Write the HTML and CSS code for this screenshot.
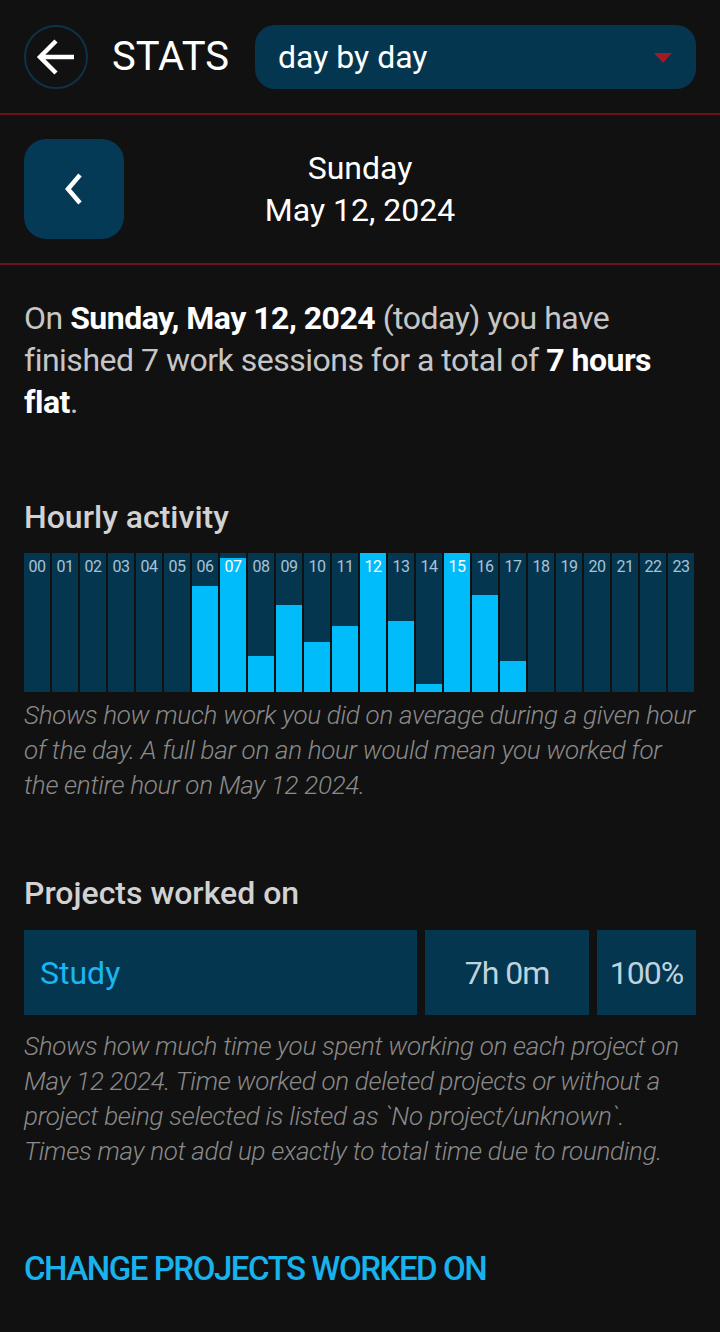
FILE: index.html
```html
<!DOCTYPE html>
<html lang="en">
<head>
<meta charset="utf-8">
<title>Stats</title>
<link rel="stylesheet" href="styles.css">
</head>
<body>
<header class="topbar">
  <button class="back-btn" aria-label="Back">
    <svg width="44" height="44" viewBox="0 0 44 44"><path d="M40 22H6M22 6L6 22l16 16" fill="none" stroke="#fff" stroke-width="4.5" stroke-linecap="butt" stroke-linejoin="miter"/></svg>
  </button>
  <h1 class="title">STATS</h1>
  <div class="dropdown">
    <span>day by day</span>
    <span class="caret"></span>
  </div>
</header>

<section class="datebar">
  <button class="prev-btn" aria-label="Previous day">
    <svg width="20" height="32" viewBox="0 0 20 32"><path d="M16 2L4 16l12 14" fill="none" stroke="#fff" stroke-width="4.5"/></svg>
  </button>
  <div class="date">
    <div>Sunday</div>
    <div>May 12, 2024</div>
  </div>
  <div class="spacer"></div>
</section>

<main class="content">
  <p class="summary">On <b>Sunday, May 12, 2024</b> (today) you have finished 7 work sessions for a total of <b>7 hours flat</b>.</p>

  <h2 class="heading hourly-heading">Hourly activity</h2>
  <div class="chart">
    <div class="col"><span class="lbl">00</span></div>
    <div class="col"><span class="lbl">01</span></div>
    <div class="col"><span class="lbl">02</span></div>
    <div class="col"><span class="lbl">03</span></div>
    <div class="col"><span class="lbl">04</span></div>
    <div class="col"><span class="lbl">05</span></div>
    <div class="col"><div class="bar" style="height:76%"></div><span class="lbl">06</span></div>
    <div class="col"><div class="bar" style="height:96.5%"></div><span class="lbl on">07</span></div>
    <div class="col"><div class="bar" style="height:26%"></div><span class="lbl">08</span></div>
    <div class="col"><div class="bar" style="height:62.5%"></div><span class="lbl">09</span></div>
    <div class="col"><div class="bar" style="height:36%"></div><span class="lbl">10</span></div>
    <div class="col"><div class="bar" style="height:47.5%"></div><span class="lbl">11</span></div>
    <div class="col"><div class="bar" style="height:100%"></div><span class="lbl on">12</span></div>
    <div class="col"><div class="bar" style="height:51%"></div><span class="lbl">13</span></div>
    <div class="col"><div class="bar" style="height:6%"></div><span class="lbl">14</span></div>
    <div class="col"><div class="bar" style="height:100%"></div><span class="lbl on">15</span></div>
    <div class="col"><div class="bar" style="height:70%"></div><span class="lbl">16</span></div>
    <div class="col"><div class="bar" style="height:22.5%"></div><span class="lbl">17</span></div>
    <div class="col"><span class="lbl">18</span></div>
    <div class="col"><span class="lbl">19</span></div>
    <div class="col"><span class="lbl">20</span></div>
    <div class="col"><span class="lbl">21</span></div>
    <div class="col"><span class="lbl">22</span></div>
    <div class="col"><span class="lbl">23</span></div>
  </div>
  <p class="caption">Shows how much work you did on average during a given hour of the day. A full bar on an hour would mean you worked for the entire hour on May 12 2024.</p>

  <h2 class="heading projects-heading">Projects worked on</h2>
  <div class="project-row">
    <div class="cell name">Study</div>
    <div class="cell num">7h 0m</div>
    <div class="cell num">100%</div>
  </div>
  <p class="caption caption2">Shows how much time you spent working on each project on May 12 2024. Time worked on deleted projects or without a project being selected is listed as `No project/unknown`. Times may not add up exactly to total time due to rounding.</p>

  <a class="change-link" href="#">CHANGE PROJECTS WORKED ON</a>
</main>
</body>
</html>
```

FILE: styles.css
```css
* { box-sizing: border-box; }

html, body {
  margin: 0;
  background: #111111;
}

body {
  font-family: Roboto, "Noto Sans", sans-serif;
  color: #c9c9c9;
  width: 720px;
  min-height: 1332px;
}

button {
  font: inherit;
  padding: 0;
  cursor: pointer;
}

.topbar {
  display: flex;
  align-items: center;
  gap: 24px;
  padding: 25px 24px 24px;
  border-bottom: 2px solid #6e1217;
}

.back-btn {
  width: 64px;
  height: 64px;
  flex: none;
  border-radius: 32px;
  border: 2px solid #0c3347;
  background: #111111;
  display: flex;
  align-items: center;
  justify-content: center;
}

.title {
  margin: 0 2px 0 0;
  font-size: 40px;
  font-weight: 400;
  color: #ffffff;
  line-height: 64px;
}

.dropdown {
  flex: 1;
  height: 64px;
  border-radius: 20px;
  background: #053650;
  display: flex;
  align-items: center;
  justify-content: space-between;
  padding: 0 24px 0 23px;
  font-size: 32px;
  color: #ffffff;
}

.caret {
  width: 0;
  height: 0;
  border-left: 9px solid transparent;
  border-right: 9px solid transparent;
  border-top: 10px solid #a01b25;
  margin-top: 2px;
}

.datebar {
  display: flex;
  align-items: center;
  padding: 24px;
  border-bottom: 2px solid #6e1217;
}

.prev-btn {
  width: 100px;
  height: 100px;
  flex: none;
  border: none;
  border-radius: 22px;
  background: #053a56;
  display: flex;
  align-items: center;
  justify-content: center;
}

.date {
  flex: 1;
  text-align: center;
  color: #ffffff;
  font-size: 32px;
  line-height: 42px;
}

.spacer {
  width: 100px;
  flex: none;
}

.content {
  padding: 0 24px;
}

.summary {
  margin: 32px 0 0;
  font-size: 32px;
  line-height: 42px;
  letter-spacing: -0.5px;
  color: #c6c6c6;
}

.summary b {
  color: #ffffff;
  font-weight: 700;
}

.heading {
  margin: 0;
  font-size: 32px;
  line-height: 40px;
  font-weight: 500;
  color: #d2d2d2;
}

.hourly-heading {
  margin-top: 74px;
}

.chart {
  margin-top: 16px;
  width: 670px;
  height: 139px;
  display: grid;
  grid-template-columns: repeat(24, 1fr);
  gap: 2px;
}

.col {
  position: relative;
  background: #053650;
  display: flex;
  flex-direction: column;
  justify-content: flex-end;
}

.bar {
  background: #00bcfb;
}

.lbl {
  position: absolute;
  top: 4px;
  left: 0;
  right: 0;
  text-align: center;
  font-size: 16px;
  line-height: 20px;
  letter-spacing: -0.5px;
  color: #a9c3d3;
}

.lbl.on {
  color: #ffffff;
}

.caption {
  margin: 6px 0 0;
  font-size: 26px;
  line-height: 35px;
  font-style: italic;
  font-weight: 300;
  letter-spacing: -0.3px;
  color: #8a8a8a;
}

.projects-heading {
  margin-top: 70px;
}

.project-row {
  margin-top: 17px;
  display: grid;
  grid-template-columns: 1fr 164px 99px;
  gap: 8px;
  height: 85px;
}

.cell {
  background: #053650;
  display: flex;
  align-items: center;
  font-size: 32px;
}

.cell.name {
  padding-left: 16px;
  color: #1ab6ef;
}

.cell.num {
  justify-content: center;
  color: #bfd3df;
  letter-spacing: -1px;
}

.caption2 {
  margin-top: 14px;
}

.change-link {
  display: block;
  margin-top: 80px;
  font-size: 33px;
  line-height: 40px;
  font-weight: 500;
  letter-spacing: -1.45px;
  color: #18b2ec;
  text-decoration: none;
}
```
